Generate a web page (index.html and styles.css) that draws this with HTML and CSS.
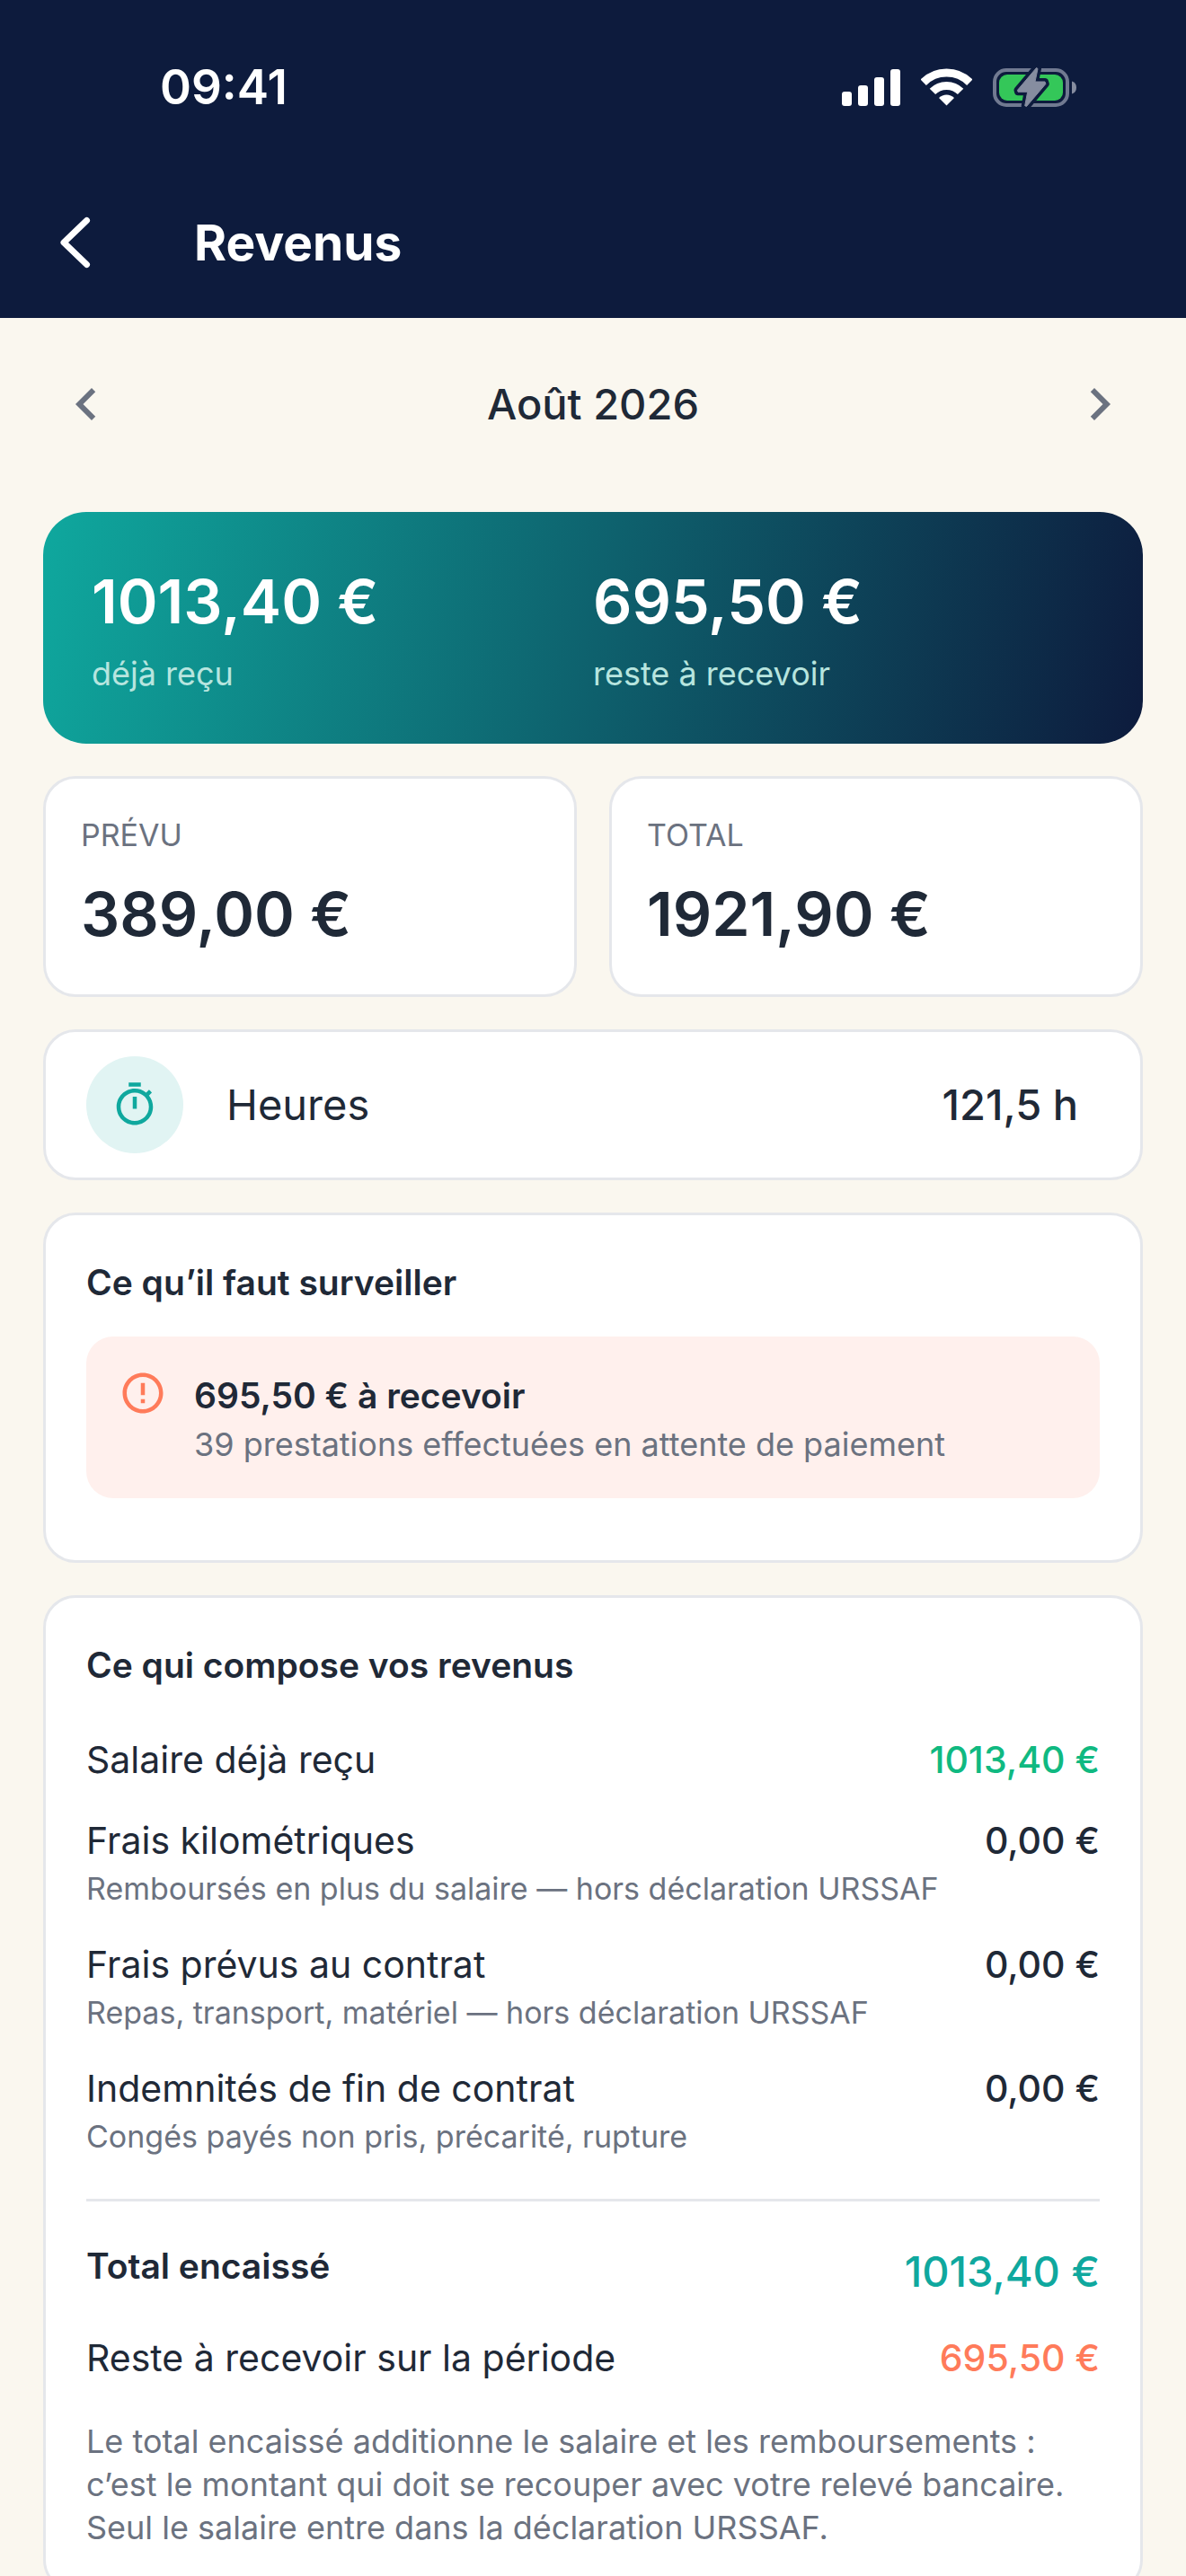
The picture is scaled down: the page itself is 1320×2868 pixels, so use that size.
FILE: index.html
```html
<!DOCTYPE html>
<html lang="fr">
<head>
  <meta charset="UTF-8">
  <meta name="viewport" content="width=device-width, initial-scale=1.0">
  <title>Revenus</title>
  <link rel="stylesheet" href="styles.css">
</head>
<body>
  <header>
    <!-- Barre d'état -->
    <div class="status-bar">
      <time>09:41</time>
      <div class="status-icons">
        <svg width="65" height="42" viewBox="0 0 65 42" fill="#fff" aria-hidden="true">
          <rect x="0" y="26" width="11" height="16" rx="3"/>
          <rect x="18" y="19" width="11" height="23" rx="3"/>
          <rect x="36" y="10" width="11" height="32" rx="3"/>
          <rect x="54" y="1" width="11" height="41" rx="3"/>
        </svg>
        <svg width="57" height="42" viewBox="0 0 57 42" fill="none" stroke="#fff" stroke-width="9" aria-hidden="true">
          <path d="M2.7 15.7a36.5 36.5 0 0 1 51.6 0"/>
          <path d="M12.9 25.9a22 22 0 0 1 31.2 0"/>
          <path d="M28.5 41.5l-8.5-8.5a12 12 0 0 1 17 0z" fill="#fff" stroke="none"/>
        </svg>
        <svg width="93" height="46" viewBox="0 0 93 46" aria-hidden="true">
          <rect x="2" y="4" width="81" height="39" rx="13" fill="none" stroke="#717a91" stroke-width="4"/>
          <rect x="7" y="9" width="71" height="29" rx="9" fill="#34c759"/>
          <path d="M88 16.5c3.3 1 5 3.6 5 7s-1.7 6-5 7z" fill="#868da0"/>
          <path class="bolt-gap" d="M48.5 1.5l1.5 1-3 14.5h11l.8 2.5L37.5 44.500l-1.800-.8 3-15.400H28l-.5-2z"/>
          <path class="bolt" d="M48.5 1.5l1.5 1-3 14.5h11l.8 2.5L37.5 44.500l-1.800-.8 3-15.400H28l-.5-2z"/>
        </svg>
      </div>
    </div>

    <!-- Barre de titre -->
    <div class="app-bar">
      <button type="button" class="back" aria-label="Retour">
        <svg width="72" height="72" viewBox="0 0 72 72" fill="none" stroke="#fff" stroke-width="7" stroke-linecap="round" stroke-linejoin="round">
          <path d="M48.5 11.5L23 36l25.5 24.5"/>
        </svg>
      </button>
      <h1>Revenus</h1>
    </div>
  </header>

  <main>
    <!-- Choix du mois -->
    <nav class="month">
      <button type="button" aria-label="Mois précédent">
        <svg width="72" height="72" viewBox="0 0 24 24" fill="#6b7280"><path d="M15.41 7.41L14 6l-6 6 6 6 1.41-1.41L10.83 12z"/></svg>
      </button>
      <h2>Août 2026</h2>
      <button type="button" aria-label="Mois suivant">
        <svg width="72" height="72" viewBox="0 0 24 24" fill="#6b7280"><path d="M10 6L8.59 7.41 13.17 12l-4.58 4.59L10 18l6-6z"/></svg>
      </button>
    </nav>

    <section class="summary">
      <div>
        <p class="amount">1013,40 €</p>
        <p class="label">déjà reçu</p>
      </div>
      <div>
        <p class="amount">695,50 €</p>
        <p class="label">reste à recevoir</p>
      </div>
    </section>

    <section class="stats">
      <div class="card stat">
        <p class="label">PRÉVU</p>
        <p class="amount">389,00 €</p>
      </div>
      <div class="card stat">
        <p class="label">TOTAL</p>
        <p class="amount">1921,90 €</p>
      </div>
    </section>

    <section class="card hours">
      <span class="hours-icon">
        <svg width="54" height="54" viewBox="0 0 24 24" fill="#0fa89e" aria-hidden="true"><path d="M15 1H9v2h6V1zm-4 13h2V8h-2v6zm8.03-6.61l1.42-1.42c-.43-.51-.9-.99-1.41-1.41l-1.42 1.42A8.962 8.962 0 0 0 12 4c-4.97 0-9 4.03-9 9s4.02 9 9 9 9-4.03 9-9c0-2.12-.74-4.07-1.97-5.61zM12 20c-3.87 0-7-3.13-7-7s3.13-7 7-7 7 3.13 7 7-3.13 7-7 7z"/></svg>
      </span>
      <p class="hours-label">Heures</p>
      <p class="hours-value">121,5 h</p>
    </section>

    <!-- Alertes -->
    <section class="card">
      <h3>Ce qu’il faut surveiller</h3>
      <div class="alert">
        <svg width="54" height="54" viewBox="0 0 24 24" fill="#ff7b5a" aria-hidden="true"><path d="M11 15h2v2h-2zm0-8h2v6h-2zm.99-5C6.47 2 2 6.48 2 12s4.47 10 9.99 10C17.52 22 22 17.52 22 12S17.52 2 11.99 2zM12 20c-4.42 0-8-3.58-8-8s3.58-8 8-8 8 3.58 8 8-3.58 8-8 8z"/></svg>
        <div>
          <p class="alert-title">695,50 € à recevoir</p>
          <p class="alert-text">39 prestations effectuées en attente de paiement</p>
        </div>
      </div>
    </section>

    <!-- Détail des revenus -->
    <section class="card">
      <h3>Ce qui compose vos revenus</h3>
      <ul class="lines">
        <li>
          <div class="line"><span>Salaire déjà reçu</span><span class="value received">1013,40 €</span></div>
        </li>
        <li>
          <div class="line"><span>Frais kilométriques</span><span class="value">0,00 €</span></div>
          <p class="note">Remboursés en plus du salaire — hors déclaration URSSAF</p>
        </li>
        <li>
          <div class="line"><span>Frais prévus au contrat</span><span class="value">0,00 €</span></div>
          <p class="note">Repas, transport, matériel — hors déclaration URSSAF</p>
        </li>
        <li>
          <div class="line"><span>Indemnités de fin de contrat</span><span class="value">0,00 €</span></div>
          <p class="note">Congés payés non pris, précarité, rupture</p>
        </li>
      </ul>
      <ul class="lines totals">
        <li>
          <div class="line"><strong>Total encaissé</strong><span class="value total">1013,40 €</span></div>
        </li>
        <li>
          <div class="line"><span>Reste à recevoir sur la période</span><span class="value pending">695,50 €</span></div>
        </li>
      </ul>
      <p class="help">Le total encaissé additionne le salaire et les remboursements&nbsp;: c’est le montant qui doit se recouper avec votre relevé bancaire. Seul le salaire entre dans la déclaration URSSAF.</p>
    </section>
  </main>
</body>
</html>
```
FILE: styles.css
```css
* {
  box-sizing: border-box;
}
body {
  display: flex;
  flex-direction: column;
  height: 100vh;
  margin: 0;
  background: #faf7ef;
  color: #1f2937;
  font-family: Inter, "Noto Sans", sans-serif;
  font-size: 41px;
  line-height: 60px;
}
h1, h2, h3, p, ul {
  margin: 0;
  padding: 0;
}
ul {
  list-style: none;
}
svg {
  display: block;
  flex-shrink: 0;
}
button {
  padding: 0;
  border: 0;
  background: none;
  cursor: pointer;
}

/* En-tête */
header {
  flex-shrink: 0;
  background: #0d1b3d;
  color: #fff;
}
.status-bar {
  display: flex;
  align-items: center;
  justify-content: space-between;
  height: 186px;
  padding: 8px 122px 0 178px;
}
.status-bar time {
  font-size: 53px;
  font-weight: 600;
}
.status-icons {
  display: flex;
  align-items: center;
  gap: 23px;
}
.bolt-gap {
  fill: #0d1b3d;
  stroke: #0d1b3d;
  stroke-width: 8px;
  stroke-linejoin: round;
}
.bolt {
  fill: #868da0;
  stroke: #868da0;
  stroke-width: 1px;
  stroke-linejoin: round;
}
.app-bar {
  display: flex;
  align-items: center;
  gap: 96px;
  height: 168px;
  padding: 0 48px;
}
h1 {
  font-size: 55px;
  font-weight: 700;
}

/* Contenu */
main {
  display: flex;
  flex: 1;
  flex-direction: column;
  gap: 36px;
  min-height: 0;
  padding: 60px 48px 48px;
  overflow-y: auto;
  scrollbar-width: none;
}
main > * {
  flex-shrink: 0;
}
.month {
  display: flex;
  align-items: center;
  justify-content: space-between;
  margin-bottom: 48px;
  padding: 0 12px;
}
h2 {
  font-size: 47px;
  font-weight: 500;
}
.amount {
  font-size: 68px;
  font-weight: 600;
  line-height: 90px;
}
.summary {
  display: grid;
  grid-template-columns: 1fr 1fr;
  padding: 54px;
  border-radius: 48px;
  background: linear-gradient(102deg, #0fa89e, #0d1b3d);
  color: #fff;
}
.summary .label {
  margin-top: 12px;
  color: #b7e5df;
  font-size: 36px;
  line-height: 48px;
}
.card {
  padding: 45px;
  border: 3px solid #e5e7eb;
  border-radius: 36px;
  background: #fff;
}
.stats {
  display: grid;
  grid-template-columns: 1fr 1fr;
  gap: 36px;
}
.stat {
  padding: 42px 39px 45px;
}
.stat .label {
  margin-bottom: 21px;
  color: #6b7280;
  font-size: 34px;
  line-height: 42px;
}
.hours {
  display: flex;
  align-items: center;
  gap: 48px;
  padding: 27px 69px 27px 45px;
  font-size: 47px;
}
.hours-icon {
  display: flex;
  align-items: center;
  justify-content: center;
  width: 108px;
  height: 108px;
  border-radius: 50%;
  background: #e1f4f3;
}
.hours-value {
  margin-left: auto;
  font-weight: 500;
}
h3, strong, .alert-title {
  font-size: 39px;
  font-weight: 600;
}
.alert {
  display: flex;
  gap: 30px;
  margin: 30px 0 24px;
  padding: 36px;
  border-radius: 30px;
  background: #fff0ed;
}
.alert-text, .help {
  color: #6b7280;
  font-size: 36px;
  line-height: 48px;
}
.lines li {
  padding: 15px 0;
}
h3 + .lines {
  margin-top: 30px;
}
.line {
  display: flex;
  justify-content: space-between;
  gap: 24px;
}
.value {
  font-weight: 500;
  white-space: nowrap;
}
.received {
  color: #10b981;
}
.pending {
  color: #ff7b5a;
}
.total {
  color: #0fa89e;
  font-size: 47px;
  line-height: 72px;
}
.note {
  color: #6b7280;
  font-size: 34px;
  line-height: 48px;
}
.totals {
  margin-top: 30px;
  padding-top: 27px;
  border-top: 3px solid #e5e7eb;
}
.help {
  margin-top: 24px;
}
```
